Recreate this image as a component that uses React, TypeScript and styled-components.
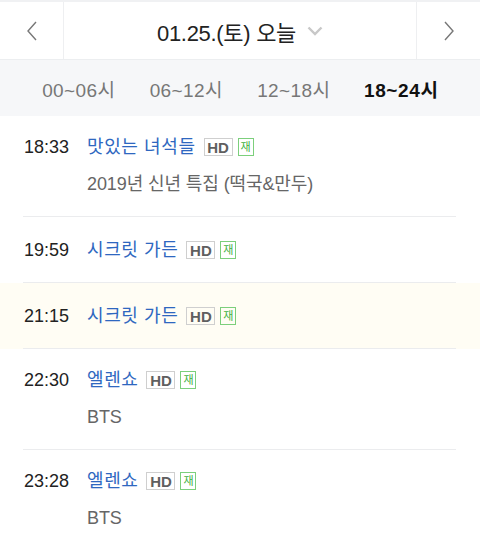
import styled, { createGlobalStyle } from 'styled-components'

const GlobalStyle = createGlobalStyle`
  body {
    margin: 0;
    background: #fff;
    font-family: 'Liberation Sans', 'Noto Sans CJK KR', sans-serif;
    -webkit-font-smoothing: antialiased;
  }
`

const Page = styled.div`
  width: 480px;
  height: 538px;
  overflow: hidden;
  background: #fff;
`

const DateBar = styled.div`
  display: grid;
  grid-template-columns: 64px 1fr 64px;
  height: 57px;
  border-top: 2px solid #f0f1f3;
  border-bottom: 1px solid #eceef0;
`

const NavCell = styled.button<{ $side: 'left' | 'right' }>`
  display: flex;
  align-items: center;
  justify-content: center;
  padding: 0;
  border: 0;
  background: #fff;
  ${(p) =>
    p.$side === 'left'
      ? 'border-right: 1px solid #eeeff1;'
      : 'border-left: 1px solid #eeeff1;'}
`

const DateTitle = styled.div`
  display: flex;
  align-items: center;
  justify-content: center;
  gap: 11px;
  padding-top: 1px;
  font-size: 22px;
  color: #222;
  letter-spacing: -0.3px;
`

const TabRow = styled.div`
  display: grid;
  grid-template-columns: repeat(4, 1fr);
  height: 56px;
  padding: 0 25px;
  background: #f6f7f9;
`

const Tab = styled.div<{ $active?: boolean }>`
  display: flex;
  align-items: center;
  justify-content: center;
  font-size: 19px;
  letter-spacing: ${(p) => (p.$active ? '0.6px' : '0.4px')};
  color: ${(p) => (p.$active ? '#111' : '#777')};
  font-weight: ${(p) => (p.$active ? 700 : 400)};
`

const Row = styled.div<{ $now?: boolean }>`
  background: ${(p) => (p.$now ? '#fffdf4' : '#fff')};
`

const RowInner = styled.div<{ $single?: boolean }>`
  display: flex;
  margin: 0 24px 0 23px;
  padding: ${(p) => (p.$single ? '20px 0 19px 1px' : '18px 0 21px 1px')};
  border-bottom: 1px solid #ebecee;
`

const Time = styled.div`
  width: 63px;
  flex-shrink: 0;
  font-size: 18px;
  line-height: 26px;
  color: #222;
`

const Info = styled.div`
  display: flex;
  flex-direction: column;
  gap: 13px;
`

const TitleLine = styled.div`
  display: flex;
  align-items: center;
  height: 26px;
`

const Title = styled.span`
  font-size: 18px;
  line-height: 26px;
  color: #2e67c0;
  letter-spacing: 0.6px;
  margin-right: 8px;
`

const Badge = styled.span<{ $tone: 'grey' | 'green' }>`
  display: inline-flex;
  align-items: center;
  justify-content: center;
  box-sizing: border-box;
  height: 18px;
  min-width: ${(p) => (p.$tone === 'grey' ? '29px' : '16px')};
  padding: 0 1px;
  margin-right: 5px;
  font-size: ${(p) => (p.$tone === 'grey' ? '15px' : '11px')};
  font-weight: ${(p) => (p.$tone === 'grey' ? 700 : 400)};
  letter-spacing: 0;
  color: ${(p) => (p.$tone === 'grey' ? '#5f5f5f' : '#3fb23f')};
  border: 1px solid ${(p) => (p.$tone === 'grey' ? '#cfcfcf' : '#7ccf7c')};
  line-height: 1;
`

const Sub = styled.div`
  font-size: 18px;
  line-height: 22px;
  color: #666;
  letter-spacing: -0.1px;
`

const Chevron = ({ dir }: { dir: 'left' | 'right' }) => (
  <svg width="12" height="20" viewBox="0 0 12 20">
    <polyline
      points={dir === 'left' ? '10,1 2,10 10,19' : '2,1 10,10 2,19'}
      fill="none"
      stroke="#777"
      strokeWidth="1.4"
    />
  </svg>
)

const Caret = () => (
  <svg width="16" height="10" viewBox="0 0 16 10">
    <polyline
      points="1.5,1.5 8,8 14.5,1.5"
      fill="none"
      stroke="#c8c8c8"
      strokeWidth="2.4"
    />
  </svg>
)

type Program = { time: string; title: string; sub?: string; now?: boolean }

const programs: Program[] = [
  { time: '18:33', title: '맛있는 녀석들', sub: '2019년 신년 특집 (떡국&만두)' },
  { time: '19:59', title: '시크릿 가든' },
  { time: '21:15', title: '시크릿 가든', now: true },
  { time: '22:30', title: '엘렌쇼', sub: 'BTS' },
  { time: '23:28', title: '엘렌쇼', sub: 'BTS' },
]

const tabs = ['00~06시', '06~12시', '12~18시', '18~24시']

export default function App() {
  return (
    <Page>
      <GlobalStyle />
      <DateBar>
        <NavCell $side="left">
          <Chevron dir="left" />
        </NavCell>
        <DateTitle>
          <span>01.25.(토) 오늘</span>
          <Caret />
        </DateTitle>
        <NavCell $side="right">
          <Chevron dir="right" />
        </NavCell>
      </DateBar>
      <TabRow>
        {tabs.map((t, i) => (
          <Tab key={t} $active={i === 3}>
            {t}
          </Tab>
        ))}
      </TabRow>
      {programs.map((p) => (
        <Row key={p.time} $now={p.now}>
          <RowInner $single={!p.sub}>
            <Time>{p.time}</Time>
            <Info>
              <TitleLine>
                <Title>{p.title}</Title>
                <Badge $tone="grey">HD</Badge>
                <Badge $tone="green">재</Badge>
              </TitleLine>
              {p.sub && <Sub>{p.sub}</Sub>}
            </Info>
          </RowInner>
        </Row>
      ))}
    </Page>
  )
}
